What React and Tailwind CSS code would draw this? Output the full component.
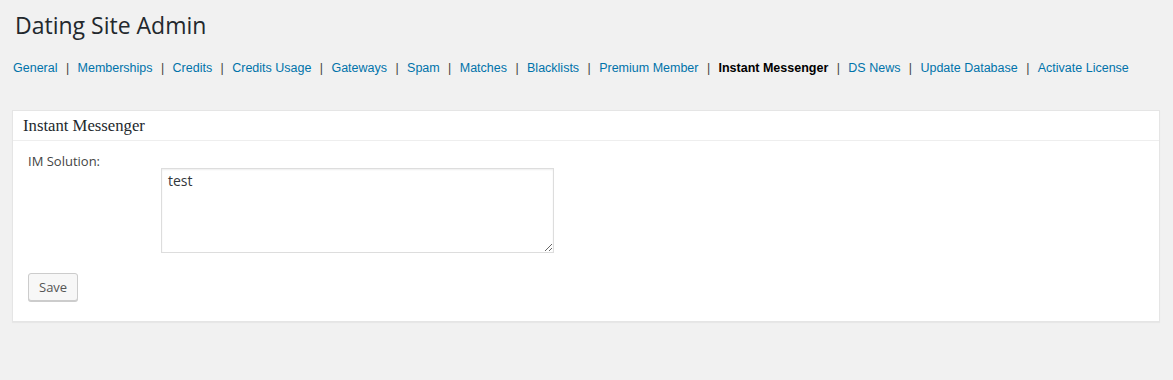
import React from "react";

const links = [
  "General",
  "Memberships",
  "Credits",
  "Credits Usage",
  "Gateways",
  "Spam",
  "Matches",
  "Blacklists",
  "Premium Member",
  "Instant Messenger",
  "DS News",
  "Update Database",
  "Activate License",
];

export default function App() {
  return (
    <div className="min-h-[380px] w-full bg-[#f1f1f1] pl-[12px] pr-[13px] pt-[11px]" style={{ fontFamily: '"Open Sans", sans-serif' }}>
      <h2 className="pl-[3px] text-[23px] leading-[29px] font-normal text-[#23282d]">Dating Site Admin</h2>
      <div className="mt-[19px] flex items-center whitespace-nowrap pl-[1px] text-[12.5px] leading-[18px]" style={{ fontFamily: '"Liberation Sans", Arial, sans-serif' }}>
        {links.map((l, i) => (
          <React.Fragment key={l}>
            {i > 0 && <span className="mx-[8.4px] text-[#444]">|</span>}
            {l === "Instant Messenger" ? (
              <span className="font-bold text-black">{l}</span>
            ) : (
              <a className="text-[#0073aa]">{l}</a>
            )}
          </React.Fragment>
        ))}
      </div>
      <div className="mt-[33px] w-[1148px] border border-[#e5e5e5] bg-white shadow-[0_1px_1px_rgba(0,0,0,0.04)]">
        <div className="flex h-[30px] items-center whitespace-nowrap border-b border-[#eee] px-[10px] pt-[1px] text-[16.7px] text-[#23282d]" style={{ fontFamily: '"Liberation Serif", "Times New Roman", serif' }}>
          Instant Messenger
        </div>
        <div className="px-[15px] pb-[20px] pt-[11px]">
          <div className="flex">
            <div className="w-[133px] text-[13px] leading-[18px] text-[#444]">IM Solution:</div>
            <textarea
              defaultValue="test"
              className="mt-[16px] h-[85px] w-[393px] resize-y border border-[#ddd] bg-white px-[6px] py-[2px] text-[14px] leading-[20px] text-[#32373c] shadow-[inset_0_1px_2px_rgba(0,0,0,0.07)] outline-none"
              style={{ fontFamily: '"Open Sans", sans-serif' }}
            />
          </div>
          <button className="mt-[20px] h-[28px] rounded-[3px] border border-[#ccc] bg-[#f7f7f7] px-[10px] text-[13px] leading-[26px] text-[#555] shadow-[0_1px_0_#ccc]">
            Save
          </button>
        </div>
      </div>
    </div>
  );
}
